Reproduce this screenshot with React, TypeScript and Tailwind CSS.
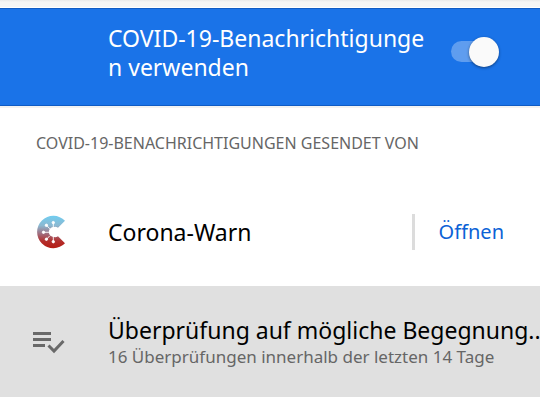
function CoronaIcon() {
  return (
    <svg viewBox="0 0 34 34" className="size-[34px]" aria-hidden="true">
      <defs>
        <linearGradient id="corona" x1="0" y1="0" x2="0" y2="1">
          <stop offset="0" stopColor="#71cdf0" />
          <stop offset="0.3" stopColor="#8bb9d2" />
          <stop offset="0.55" stopColor="#a06f80" />
          <stop offset="0.78" stopColor="#b32e2c" />
          <stop offset="1" stopColor="#b51d14" />
        </linearGradient>
      </defs>
      <path
        d="M29 5.8A16.2 16.2 0 1 0 29 28.2L22 21.2A5 5 0 1 1 22 12.8Z"
        fill="url(#corona)"
      />
      <g stroke="#fff" strokeWidth="0.9" fill="#fff">
        <path d="M17.3 8v5M10.6 10.4l3.2 3.4M7.5 17.3h6M10.6 24.2l3.2-3.4M17.3 26.5v-5" />
        <circle cx="17.3" cy="7.6" r="1.2" />
        <circle cx="10.4" cy="10.3" r="1.2" />
        <circle cx="7.5" cy="17.3" r="1.2" />
        <circle cx="10.4" cy="24.2" r="1.2" />
        <circle cx="17.3" cy="26.7" r="1.2" />
        <circle cx="17.8" cy="17" r="5" stroke="none" />
      </g>
    </svg>
  );
}

function ChecklistIcon() {
  return (
    <svg viewBox="0 0 32 24" className="h-6 w-8" aria-hidden="true">
      <path d="M0 2h18v3H0zM0 8h18v3H0zM0 14h12v3H0z" fill="#696969" />
      <path d="M15.5 15.5l5.5 5.5 9.5-10" fill="none" stroke="#696969" strokeWidth="3" />
    </svg>
  );
}

export default function App() {
  return (
    <main className="bg-white font-['Noto_Sans',sans-serif] text-black">
      <div className="h-2 border-b border-white bg-linear-to-b from-[#e9e9e9] to-[#f5f5f5] to-30%" />
      <label className="flex h-[98px] items-start border-y border-[#0f5bc4] bg-[#1a73e8] pt-[15px] pr-[41px] pl-[108px] text-white">
        <span className="w-[328px] text-[23px] leading-[29px] break-all">
          COVID-19-Benachrichtigungen verwenden
        </span>
        <span className="relative mt-3 ml-auto flex h-[31px] w-12 shrink-0 items-center">
          <input
            type="checkbox"
            role="switch"
            defaultChecked
            className="h-[21px] w-10 appearance-none rounded-full bg-[#5f9def]"
          />
          <span className="absolute right-0 size-[30px] rounded-full bg-[#fafafa] shadow-[0_1px_3px_rgba(0,0,0,0.45)]" />
        </span>
      </label>

      <section>
        <h2 className="border-t-2 border-[#f2f2f2] pt-[23px] pl-9 text-base leading-6 text-[#666]">
          COVID-19-BENACHRICHTIGUNGEN GESENDET VON
        </h2>
        <div className="flex h-[131px] items-center pt-[22px] pr-9 pl-9">
          <div className="w-[72px] shrink-0">
            <CoronaIcon />
          </div>
          <span className="text-[23px] leading-7">Corona-Warn</span>
          <div className="ml-auto flex h-9 items-center border-l-[3px] border-[#dcdcdc] pl-6">
            <button type="button" className="text-xl text-[#0b62d6]">
              Öffnen
            </button>
          </div>
        </div>
      </section>

      <section className="flex h-[111px] items-center bg-[#e0e0e0] pl-[33px]">
        <div className="w-[75px] shrink-0">
          <ChecklistIcon />
        </div>
        <div className="min-w-0">
          <p className="text-[23px] leading-[30px] whitespace-nowrap">
            Überprüfung auf mögliche Begegnung..
          </p>
          <p className="text-[17px] leading-6 whitespace-nowrap text-[#666]">
            16 Überprüfungen innerhalb der letzten 14 Tage
          </p>
        </div>
      </section>
    </main>
  );
}
